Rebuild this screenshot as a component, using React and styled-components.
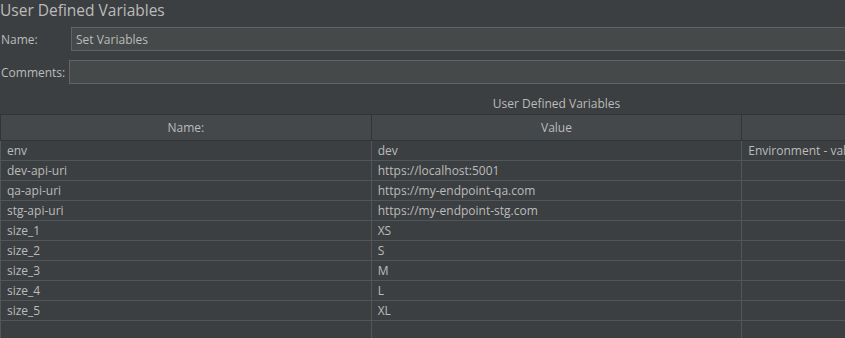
import React from 'react'
import styled, { createGlobalStyle } from 'styled-components'

const rows = [
    ['env', 'dev', 'Environment - valid values: dev, qa, stg'],
    ['dev-api-uri', 'https://localhost:5001', ''],
    ['qa-api-uri', 'https://my-endpoint-qa.com', ''],
    ['stg-api-uri', 'https://my-endpoint-stg.com', ''],
    ['size_1', 'XS', ''],
    ['size_2', 'S', ''],
    ['size_3', 'M', ''],
    ['size_4', 'L', ''],
    ['size_5', 'XL', ''],
    ['', '', ''],
]

export default function App() {
    return (
        <>
            <GlobalStyle />
            <Panel>
                <Title>User Defined Variables</Title>
                <FieldRow top={7}>
                    <Label width={71}>Name:</Label>
                    <Field defaultValue="Set Variables" />
                </FieldRow>
                <FieldRow top={9}>
                    <Label width={69}>Comments:</Label>
                    <Field defaultValue="" />
                </FieldRow>
                <Caption>User Defined Variables</Caption>
                <Table>
                    <thead>
                        <tr>
                            <Th>Name:</Th>
                            <Th>Value</Th>
                            <Th>Description</Th>
                        </tr>
                    </thead>
                    <tbody>
                        {rows.map((r, i) => (
                            <tr key={i}>
                                <Td>{r[0]}</Td>
                                <Td>{r[1]}</Td>
                                <Td>{r[2]}</Td>
                            </tr>
                        ))}
                    </tbody>
                </Table>
            </Panel>
        </>
    )
}

const GlobalStyle = createGlobalStyle`
    html, body {
        margin: 0;
        padding: 0;
        background: #3c3f41;
        overflow: hidden;
    }
    body {
        font-family: "Open Sans", "Noto Sans", sans-serif;
        color: #bbbbbb;
    }
`;

const Panel = styled.div`
    width: 1113px;
    height: 338px;
    display: flex;
    flex-direction: column;
`;

const Title = styled.div`
    font-size: 15.5px;
    line-height: 20px;
    height: 20px;
    color: #bbbbbb;
`;

const FieldRow = styled.div`
    display: flex;
    align-items: center;
    margin-top: ${p => p.top}px;
    height: 24px;
`;

const Label = styled.div`
    width: ${p => p.width}px;
    flex-shrink: 0;
    font-size: 12px;
    padding-left: 1px;
    box-sizing: border-box;
`;

const Field = styled.input`
    flex: 1;
    height: 24px;
    box-sizing: border-box;
    background: #45494a;
    border: 1px solid #646464;
    color: #bbbbbb;
    font-family: "Open Sans", "Noto Sans", sans-serif;
    font-size: 12px;
    padding: 0 4px;
    outline: none;
`;

const Caption = styled.div`
    text-align: center;
    font-size: 12px;
    line-height: 20px;
    margin-top: 10px;
    height: 26px;
`;

const Table = styled.table`
    width: 1113px;
    border-collapse: collapse;
    table-layout: fixed;
    font-size: 12px;
    background: #3c3f41;
`;

const Th = styled.th`
    height: 25px;
    background: #45484a;
    border: 1px solid #323537;
    font-weight: normal;
    color: #bbbbbb;
    padding: 0;
    text-align: center;
`;

const Td = styled.td`
    height: 19px;
    border: 1px solid #515658;
    border-top: none;
    padding: 0 0 0 6px;
    white-space: nowrap;
    overflow: hidden;
    color: #bbbbbb;
`;
